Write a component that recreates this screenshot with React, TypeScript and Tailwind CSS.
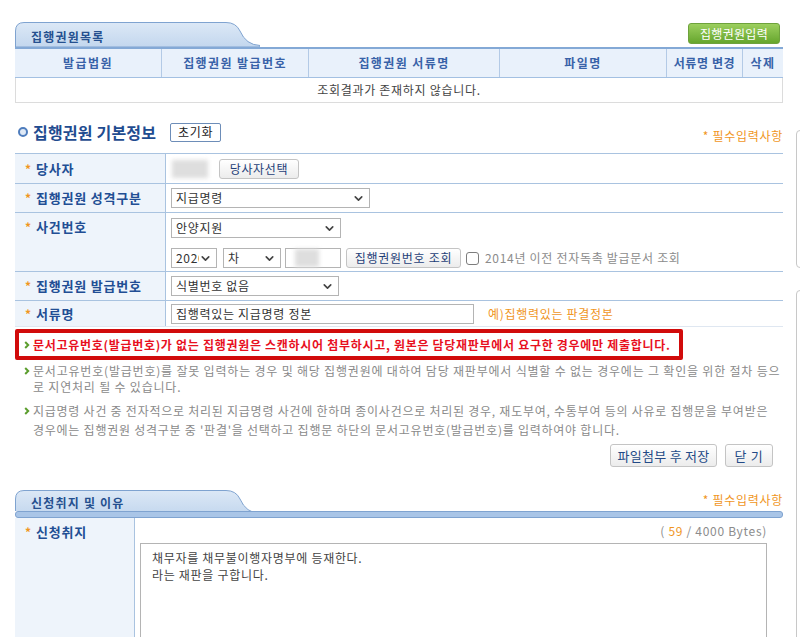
import React from 'react';
import { ChevronDown } from 'lucide-react';

const Tab: React.FC<{ label: string; id: string; pt: string }> = ({ label, id, pt }) => (
  <div className="relative w-[245px] h-[25px] shrink-0">
    <svg className="absolute left-0 top-0" width="245" height="25" viewBox="0 0 245 25">
      <defs>
        <linearGradient id={id} x1="0" y1="0" x2="0" y2="1">
          <stop offset="0" stopColor="#dce8f6" />
          <stop offset="1" stopColor="#c3d7ee" />
        </linearGradient>
      </defs>
      <path
        d="M0.5 25 V9 Q0.5 0.5 9 0.5 H211 Q221 0.5 225 9 Q231 23 245 23.5 V25 Z"
        fill={`url(#${id})`}
        stroke="#7fa3d0"
      />
    </svg>
    <span className={`relative block pl-[16px] ${pt} text-[12px] leading-[18px] font-bold text-[#25508f] tracking-[1.2px]`}>
      {label}
    </span>
  </div>
);

const Arrow: React.FC = () => (
  <svg width="6" height="8" viewBox="0 0 6 8" className="shrink-0">
    <path d="M1.2 1 L4.2 4 L1.2 7" fill="none" stroke="#5c9e2e" strokeWidth="2" />
  </svg>
);

const Star: React.FC = () => (
  <span className="w-[6px] text-[12px] font-bold text-[#f0961e] leading-none">*</span>
);

const Select: React.FC<{ value: string; w: string }> = ({ value, w }) => (
  <div className={`${w} h-[20px] border border-[#b4b4b4] bg-white flex items-center justify-between pl-[4px] pr-[4px] overflow-hidden`}>
    <span className="text-[12px] text-[#333] whitespace-nowrap overflow-hidden">{value}</span>
    <ChevronDown size={13} strokeWidth={3} className="text-[#444] shrink-0" />
  </div>
);

const GrayButton: React.FC<{ label: string; w: string }> = ({ label, w }) => (
  <div className={`${w} h-[20px] rounded-[3px] border border-[#c4c4c4] bg-gradient-to-b from-white to-[#ececec] flex items-center justify-center text-[12px] text-[#1f3f78] whitespace-nowrap`}>
    {label}
  </div>
);

const Label: React.FC<{ text: string }> = ({ text }) => (
  <div className="flex items-center gap-[5px]">
    <Star />
    <span className="text-[13px] font-bold text-[#214e94] tracking-[0.8px]">{text}</span>
  </div>
);

const Blur: React.FC<{ w: string }> = ({ w }) => (
  <div className={`${w} h-[18px] bg-[#dedede] blur-[2px]`} />
);

const App: React.FC = () => {
  return (
    <div className="w-[800px] h-[637px] overflow-hidden bg-white flex items-start tracking-[0.7px] font-['Noto_Sans_CJK_KR',sans-serif]">
      <div className="ml-[15px] w-[768px] shrink-0 pt-[22px]">
        {/* 집행권원목록 */}
        <div className="flex items-end justify-between">
          <Tab label="집행권원목록" id="tab1" pt="pt-[6px]" />
          <div className="mb-[3px] mr-[3px] w-[92px] h-[21px] rounded-[3px] border border-[#6ea23c] bg-gradient-to-b from-[#9ccf5e] to-[#66a62c] flex items-center justify-center text-[12px] text-white tracking-[0.3px]">
            집행권원입력
          </div>
        </div>
        <div className="h-[2px] bg-[#84a9d6]" />
        <div className="flex h-[29px] bg-[#e9f1fb] border-b border-[#a3c0e2] text-[12px] font-bold text-[#3862a8] tracking-[1.4px]">
          <div className="w-[147px] border-r border-[#b3cae6] flex items-center justify-center">발급법원</div>
          <div className="w-[147px] border-r border-[#b3cae6] flex items-center justify-center">집행권원 발급번호</div>
          <div className="w-[191px] border-r border-[#b3cae6] flex items-center justify-center">집행권원 서류명</div>
          <div className="w-[167px] border-r border-[#b3cae6] flex items-center justify-center">파일명</div>
          <div className="w-[76px] border-r border-[#b3cae6] flex items-center justify-center tracking-[0.6px]">서류명 변경</div>
          <div className="flex-1 flex items-center justify-center">삭제</div>
        </div>
        <div className="h-[25px] border-x border-b border-[#dcdcdc] flex items-center justify-center text-[12px] text-[#444]">
          조회결과가 존재하지 않습니다.
        </div>

        {/* 집행권원 기본정보 */}
        <div className="mt-[19px] h-[20px] flex items-center">
          <div className="ml-[3px] w-[10px] h-[10px] rounded-full border-[2px] border-[#4f7dbd] bg-[#dfe9f6]" />
          <span className="ml-[5px] text-[16px] font-bold text-[#1f4c90] tracking-[0.2px]">집행권원 기본정보</span>
          <div className="ml-[14px] w-[51px] h-[19px] border border-[#6d8db8] rounded-[2px] bg-white flex items-center justify-center text-[12px] text-[#222]">
            초기화
          </div>
          <span className="ml-auto mt-[8px] text-[12px] text-[#f0961e]">* 필수입력사항</span>
        </div>

        <div className="mt-[11px] border-t border-[#a9c3e0]">
          <div className="flex h-[30px] border-b border-[#a9c3e0]">
            <div className="w-[151px] shrink-0 bg-[#eef4fb] border-r border-[#a9c3e0] flex items-center pl-[10px]">
              <Label text="당사자" />
            </div>
            <div className="flex items-center pl-[6px]">
              <Blur w="w-[36px]" />
              <div className="ml-[11px]"><GrayButton label="당사자선택" w="w-[80px]" /></div>
            </div>
          </div>
          <div className="flex h-[29px] border-b border-[#a9c3e0]">
            <div className="w-[151px] shrink-0 bg-[#eef4fb] border-r border-[#a9c3e0] flex items-center pl-[10px]">
              <Label text="집행권원 성격구분" />
            </div>
            <div className="flex items-center pl-[5px]">
              <Select value="지급명령" w="w-[199px]" />
            </div>
          </div>
          <div className="flex h-[59px] border-b border-[#a9c3e0]">
            <div className="w-[151px] shrink-0 bg-[#eef4fb] border-r border-[#a9c3e0] pl-[10px] pt-[4px] h-full">
              <div className="h-[20px] flex items-center"><Label text="사건번호" /></div>
            </div>
            <div className="flex flex-col pl-[5px] pt-[5px] gap-[10px]">
              <Select value="안양지원" w="w-[170px]" />
              <div className="flex items-center">
                <Select value="2020" w="w-[46px]" />
                <div className="ml-[6px]"><Select value="차" w="w-[58px]" /></div>
                <div className="ml-[4px] w-[56px] h-[20px] border border-[#b4b4b4] flex items-center pl-[9px]">
                  <Blur w="w-[24px]" />
                </div>
                <div className="ml-[5px]"><GrayButton label="집행권원번호 조회" w="w-[115px]" /></div>
                <div className="ml-[5px] w-[13px] h-[13px] rounded-[3px] border border-[#7d7d7d] bg-white" />
                <span className="ml-[6px] text-[12px] text-[#8c8c8c]">2014년 이전 전자독촉 발급문서 조회</span>
              </div>
            </div>
          </div>
          <div className="flex h-[29px] border-b border-[#a9c3e0]">
            <div className="w-[151px] shrink-0 bg-[#eef4fb] border-r border-[#a9c3e0] flex items-center pl-[10px]">
              <Label text="집행권원 발급번호" />
            </div>
            <div className="flex items-center pl-[5px]">
              <Select value="식별번호 없음" w="w-[168px]" />
            </div>
          </div>
          <div className="flex h-[26px] border-b border-[#dfe7f1]">
            <div className="w-[151px] shrink-0 bg-[#eef4fb] border-r border-[#a9c3e0] flex items-center pl-[10px]">
              <Label text="서류명" />
            </div>
            <div className="flex items-center pl-[5px]">
              <div className="w-[303px] h-[20px] border border-[#b4b4b4] flex items-center pl-[4px] text-[12px] text-[#333]">
                집행력있는 지급명령 정본
              </div>
              <span className="ml-[14px] text-[12px] text-[#f0961e]">예)집행력있는 판결정본</span>
            </div>
          </div>
        </div>

        <div className="mt-[2px] w-[668px] h-[31px] border-[4px] border-[#d10b0b] rounded-[2px] flex items-center pl-[5px] gap-[3px]">
          <Arrow />
          <span className="text-[12px] font-bold text-[#e8101e] whitespace-nowrap tracking-[0.7px]">
            문서고유번호(발급번호)가 없는 집행권원은 스캔하시어 첨부하시고, 원본은 담당재판부에서 요구한 경우에만 제출합니다.
          </span>
        </div>

        <div className="mt-[3px] flex pl-[9px] gap-[3px] text-[12px] leading-[16px] text-[#8a8a8a]">
          <div className="h-[16px] flex items-center"><Arrow /></div>
          <div className="whitespace-nowrap tracking-[0.8px]">
            문서고유번호(발급번호)를 잘못 입력하는 경우 및 해당 집행권원에 대하여 담당 재판부에서 식별할 수 없는 경우에는 그 확인을 위한 절차 등으
            <br />
            로 지연처리 될 수 있습니다.
          </div>
        </div>
        <div className="mt-[6px] flex pl-[9px] gap-[3px] text-[12px] leading-[19px] text-[#8a8a8a]">
          <div className="h-[19px] flex items-center"><Arrow /></div>
          <div className="whitespace-nowrap tracking-[0.75px]">
            지급명령 사건 중 전자적으로 처리된 지급명령 사건에 한하며 종이사건으로 처리된 경우, 재도부여, 수통부여 등의 사유로 집행문을 부여받은
            <br />
            경우에는 집행권원 성격구분 중 '판결'을 선택하고 집행문 하단의 문서고유번호(발급번호)를 입력하여야 합니다.
          </div>
        </div>

        <div className="mt-[5px] flex justify-end gap-[8px] pr-[10px]">
          <div className="w-[107px] h-[23px] rounded-[3px] border border-[#c4c4c4] bg-gradient-to-b from-white to-[#ececec] flex items-center justify-center text-[13px] text-[#234a86] tracking-[0.3px]">
            파일첨부 후 저장
          </div>
          <div className="w-[48px] h-[23px] rounded-[3px] border border-[#c4c4c4] bg-gradient-to-b from-white to-[#ececec] flex items-center justify-center text-[13px] text-[#234a86]">
            닫 기
          </div>
        </div>

        {/* 신청취지 및 이유 */}
        <div className="mt-[23px] flex items-end justify-between">
          <div className="h-[21px] overflow-hidden">
            <Tab label="신청취지 및 이유" id="tab2" pt="pt-[4px]" />
          </div>
          <span className="mb-[2px] text-[12px] text-[#f0961e]">* 필수입력사항</span>
        </div>
        <div className="h-[7px] rounded-[3px] bg-[#a9c5e7] border border-[#7fa3d0]" />
        <div className="flex h-[200px]">
          <div className="w-[120px] shrink-0 bg-[#eef4fb] border-r border-[#a9c3e0] pl-[10px] pt-[4px]">
            <Label text="신청취지" />
          </div>
          <div className="flex-1 pl-[5px] pr-[16px] pt-[4px]">
            <div className="text-right text-[12px] text-[#8c8c8c] h-[21px]">
              ( <span className="text-[#f0961e]">59</span> / 4000 Bytes)
            </div>
            <div className="h-[120px] border border-[#b4b4b4] pl-[11px] pt-[5px] text-[12px] leading-[17px] text-[#444]">
              채무자를 채무불이행자명부에 등재한다.
              <br />
              라는 재판을 구합니다.
            </div>
          </div>
        </div>
      </div>

      <div className="ml-[13px] flex flex-col">
        <div className="mt-[130px] w-[10px] h-[138px] border border-[#c8c8c8] rounded-l-[4px]" />
        <div className="mt-[22px] w-[10px] h-[400px] border border-[#c8c8c8] rounded-l-[4px]" />
      </div>
    </div>
  );
};

export default App;
